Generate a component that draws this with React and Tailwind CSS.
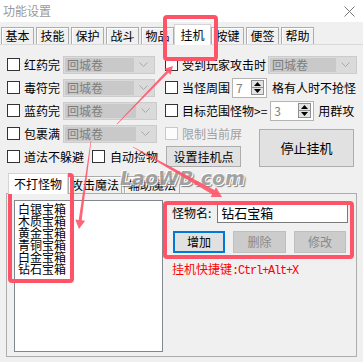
import React from 'react';

const FONT = "font-['Noto_Sans_CJK_SC','Noto_Sans',sans-serif]";

// arrow shaft that widens toward the head, like the annotation strokes
const taper = (x1, y1, x2, y2, w1, w2, head) => {
  const dx = x2 - x1;
  const dy = y2 - y1;
  const len = Math.hypot(dx, dy);
  const ux = dx / len;
  const uy = dy / len;
  const nx = -uy;
  const ny = ux;
  const bx = x2 - ux * head;
  const by = y2 - uy * head;
  const hw = head * 0.55;
  const pts = [
    [x1 + nx * w1 / 2, y1 + ny * w1 / 2],
    [bx + nx * w2 / 2, by + ny * w2 / 2],
    [bx + nx * hw, by + ny * hw],
    [x2, y2],
    [bx - nx * hw, by - ny * hw],
    [bx - nx * w2 / 2, by - ny * w2 / 2],
    [x1 - nx * w1 / 2, y1 - ny * w1 / 2],
  ];
  return pts.map(p => p[0].toFixed(1) + ',' + p[1].toFixed(1)).join(' ');
};

const Check = ({ disabled }) => (
  <span
    className={
      disabled
        ? 'block w-[13px] h-[13px] shrink-0 border border-[#c8c8c8] bg-[#fcfcfc]'
        : 'block w-[13px] h-[13px] shrink-0 border border-[#333333] bg-white'
    }
  />
);

const Combo = ({ w }) => (
  <div className={`${w} h-[18px] flex shrink-0 border border-[#cccccc] bg-[#dadada] p-[1px]`}>
    <div className="flex-1 bg-[#c9c9c9] text-[#7c7c7c] pl-[2px] leading-[14px]">回城卷</div>
    <div className="w-[19px] flex items-center justify-center">
      <svg width="9" height="5" viewBox="0 0 9 5">
        <path d="M0.5 0.5L4.5 4.5L8.5 0.5" fill="none" stroke="#a9a9a9" />
      </svg>
    </div>
  </div>
);

const Spin = ({ value, w }) => (
  <div className={`${w} h-[20px] flex shrink-0 items-center justify-between border border-[#b4b4b4] bg-white pl-[3px] pr-[2px]`}>
    <span className="text-[#808080] leading-none">{value}</span>
    <div className="w-[13px] h-[15px] flex flex-col border border-[#8f8f8f] bg-[#e4e4e4]">
      <div className="flex-1 flex items-center justify-center border-b border-[#8f8f8f]">
        <svg width="7" height="4" viewBox="0 0 7 4"><path d="M3.5 0L7 4H0z" fill="#000" /></svg>
      </div>
      <div className="flex-1 flex items-center justify-center">
        <svg width="7" height="4" viewBox="0 0 7 4"><path d="M0 0H7L3.5 4z" fill="#000" /></svg>
      </div>
    </div>
  </div>
);

const Tab = ({ label, active, w }) =>
  active ? (
    <div className={`${w} h-[21px] -mb-px -mx-[2px] relative z-10 bg-white border border-b-0 border-[#d4d4d4] flex items-center justify-center`}>
      {label}
    </div>
  ) : (
    <div className={`${w} h-[17px] bg-[#f0f0f0] border border-b-0 border-[#adadad] shadow-[inset_1px_1px_0_#ffffff] flex items-center justify-center`}>
      {label}
    </div>
  );

const Btn = ({ children, className }) => (
  <div className={`flex items-center justify-center bg-[#e1e1e1] border border-[#adadad] ${className}`}>{children}</div>
);

const App = () => {
  const tabs = ['基本', '技能', '保护', '战斗', '物品', '挂机', '按键', '便签', '帮助'];
  const items = ['白银宝箱', '木质宝箱', '黄金宝箱', '青铜宝箱', '白金宝箱', '钻石宝箱'];

  return (
    <div className={`w-[363px] h-[362px] relative overflow-hidden bg-[#f0f0f0] text-[12px] text-black ${FONT}`}>
      {/* title bar */}
      <div className="h-[22px] bg-white flex items-center justify-between pl-[3px] pr-[8px]">
        <span className="text-[#9a9a9a] leading-none">功能设置</span>
        <svg width="11" height="11" viewBox="0 0 11 11">
          <path d="M0.5 0.5L10.5 10.5M10.5 0.5L0.5 10.5" stroke="#777" />
        </svg>
      </div>

      {/* main tabs */}
      <div className="h-[22px] flex items-end gap-[2px] pl-[1px]">
        {tabs.map(t => (
          <Tab key={t} label={t} active={t === '挂机'} w={t === '挂机' ? 'w-[37px]' : 'w-[33px]'} />
        ))}
      </div>

      <div className="h-[318px] border-t border-[#d9d9d9] pt-[8px]">
        <div className="grid grid-cols-[158px_94px_1fr] grid-rows-[repeat(5,23px)] pl-[7px]">
          {/* row 1 */}
          <div className="flex items-center">
            <Check />
            <span className="ml-[4px]">红药完</span>
            <div className="ml-[3px]"><Combo w="w-[92px]" /></div>
          </div>
          <div className="col-span-2 flex items-center">
            <Check />
            <span className="ml-[4px] whitespace-nowrap">受到玩家攻击时</span>
            <div className="ml-[2px]"><Combo w="w-[89px]" /></div>
          </div>

          {/* row 2 */}
          <div className="flex items-center">
            <Check />
            <span className="ml-[4px]">毒符完</span>
            <div className="ml-[3px]"><Combo w="w-[92px]" /></div>
          </div>
          <div className="col-span-2 flex items-center">
            <Check />
            <span className="ml-[4px]">当怪周围</span>
            <div className="ml-[2px]"><Spin value="7" w="w-[35px]" /></div>
            <span className="ml-[5px] whitespace-nowrap">格有人时不抢怪</span>
          </div>

          {/* row 3 */}
          <div className="flex items-center">
            <Check />
            <span className="ml-[4px]">蓝药完</span>
            <div className="ml-[3px]"><Combo w="w-[94px]" /></div>
          </div>
          <div className="col-span-2 flex items-center">
            <Check />
            <span className="ml-[4px] whitespace-nowrap">目标范围怪物&gt;=</span>
            <div className="ml-[3px]"><Spin value="3" w="w-[44px]" /></div>
            <span className="ml-[4px]">用群攻</span>
          </div>

          {/* row 4 */}
          <div className="flex items-center">
            <Check />
            <span className="ml-[4px]">包裹满</span>
            <div className="ml-[3px]"><Combo w="w-[94px]" /></div>
          </div>
          <div className="flex items-center">
            <Check disabled />
            <span className="ml-[4px] text-[#a0a0a0] whitespace-nowrap">限制当前屏</span>
          </div>
          <div className="row-span-2 flex items-end pb-[1px]">
            <Btn className="w-[95px] h-[38px] text-[13px]">停止挂机</Btn>
          </div>

          {/* row 5 */}
          <div className="col-span-2 flex items-center">
            <Check />
            <span className="ml-[4px]">道法不躲避</span>
            <div className="ml-[8px]"><Check /></div>
            <span className="ml-[5px]">自动捡物</span>
            <Btn className="ml-[8px] w-[75px] h-[21px]">设置挂机点</Btn>
          </div>
        </div>

        {/* sub tabs */}
        <div className="mx-[6px] mt-[4px]">
          <div className="h-[21px] flex items-end gap-[2px] pl-[4px]">
            <Tab label="不打怪物" active w="w-[60px]" />
            <Tab label="攻击魔法" w="w-[54px]" />
            <Tab label="辅助魔法" w="w-[56px]" />
          </div>
          <div className="h-[164px] border border-[#adadad] flex pl-[7px] pt-[6px]">
            <div className="w-[149px] h-[152px] shrink-0 border border-[#82878f] bg-white pl-[3px] pt-[2px]">
              {items.map(it => (
                <div key={it} className="leading-[12px]">{it}</div>
              ))}
            </div>
            <div className="ml-[9px] mt-[3px] flex flex-col">
              <div className="flex items-center">
                <span>怪物名:</span>
                <div className="ml-[6px] w-[131px] h-[20px] border border-[#7a7a7a] bg-white pl-[3px] flex items-center text-[13px]">
                  钻石宝箱
                </div>
              </div>
              <div className="mt-[8px] flex gap-[8px] pl-[1px]">
                <div className="w-[52px] h-[22px] border-2 border-[#0078d7] bg-[#e1e1e1] flex items-center justify-center">增加</div>
                <div className="w-[53px] h-[22px] border border-[#bfbfbf] bg-[#cccccc] text-[#8a8a8a] flex items-center justify-center">删除</div>
                <div className="w-[52px] h-[22px] border border-[#bfbfbf] bg-[#cccccc] text-[#8a8a8a] flex items-center justify-center">修改</div>
              </div>
              <div className="mt-[9px] text-[#ff0000] leading-[14px] whitespace-nowrap">
                挂机快捷键<span className="font-['Liberation_Mono',monospace] tracking-[-1.2px]">:Ctrl+Alt+X</span>
              </div>
            </div>
          </div>
        </div>
      </div>

      {/* watermark */}
      <div className="absolute left-[120px] top-[166px] text-[19px] leading-[24px] font-bold italic font-['DejaVu_Sans',sans-serif] text-[#9a9a9a] opacity-90 [text-shadow:0_0_1px_#ffffff,1px_1px_0_#ffffff,-1px_-1px_0_#ffffff,2px_2px_1px_#777777]">
        LaoWB.com
      </div>

      {/* annotation boxes */}
      <div className="absolute left-[163px] top-[15px] w-[55px] h-[46px] border-4 border-[#ff5468] rounded-[4px]" />
      <div className="absolute left-[8px] top-[173px] w-[66px] h-[110px] border-4 border-[#ff5468] rounded-[4px]" />
      <div className="absolute left-[163px] top-[201px] w-[191px] h-[58px] border-4 border-[#ff5468] rounded-[4px]" />

      {/* annotation arrows */}
      <svg className="absolute left-0 top-0" width="363" height="362" viewBox="0 0 363 362">
        <polygon points={taper(117, 124, 173, 66, 0.6, 2.6, 8)} fill="#ff5468" opacity="0.9" />
        <polygon points={taper(91, 141, 79, 229, 0.6, 3, 9)} fill="#ff5468" opacity="0.9" />
        <polygon points={taper(133, 147, 222, 197, 0.6, 5, 10)} fill="#ff5468" opacity="0.9" />
      </svg>
    </div>
  );
};

export default App;
